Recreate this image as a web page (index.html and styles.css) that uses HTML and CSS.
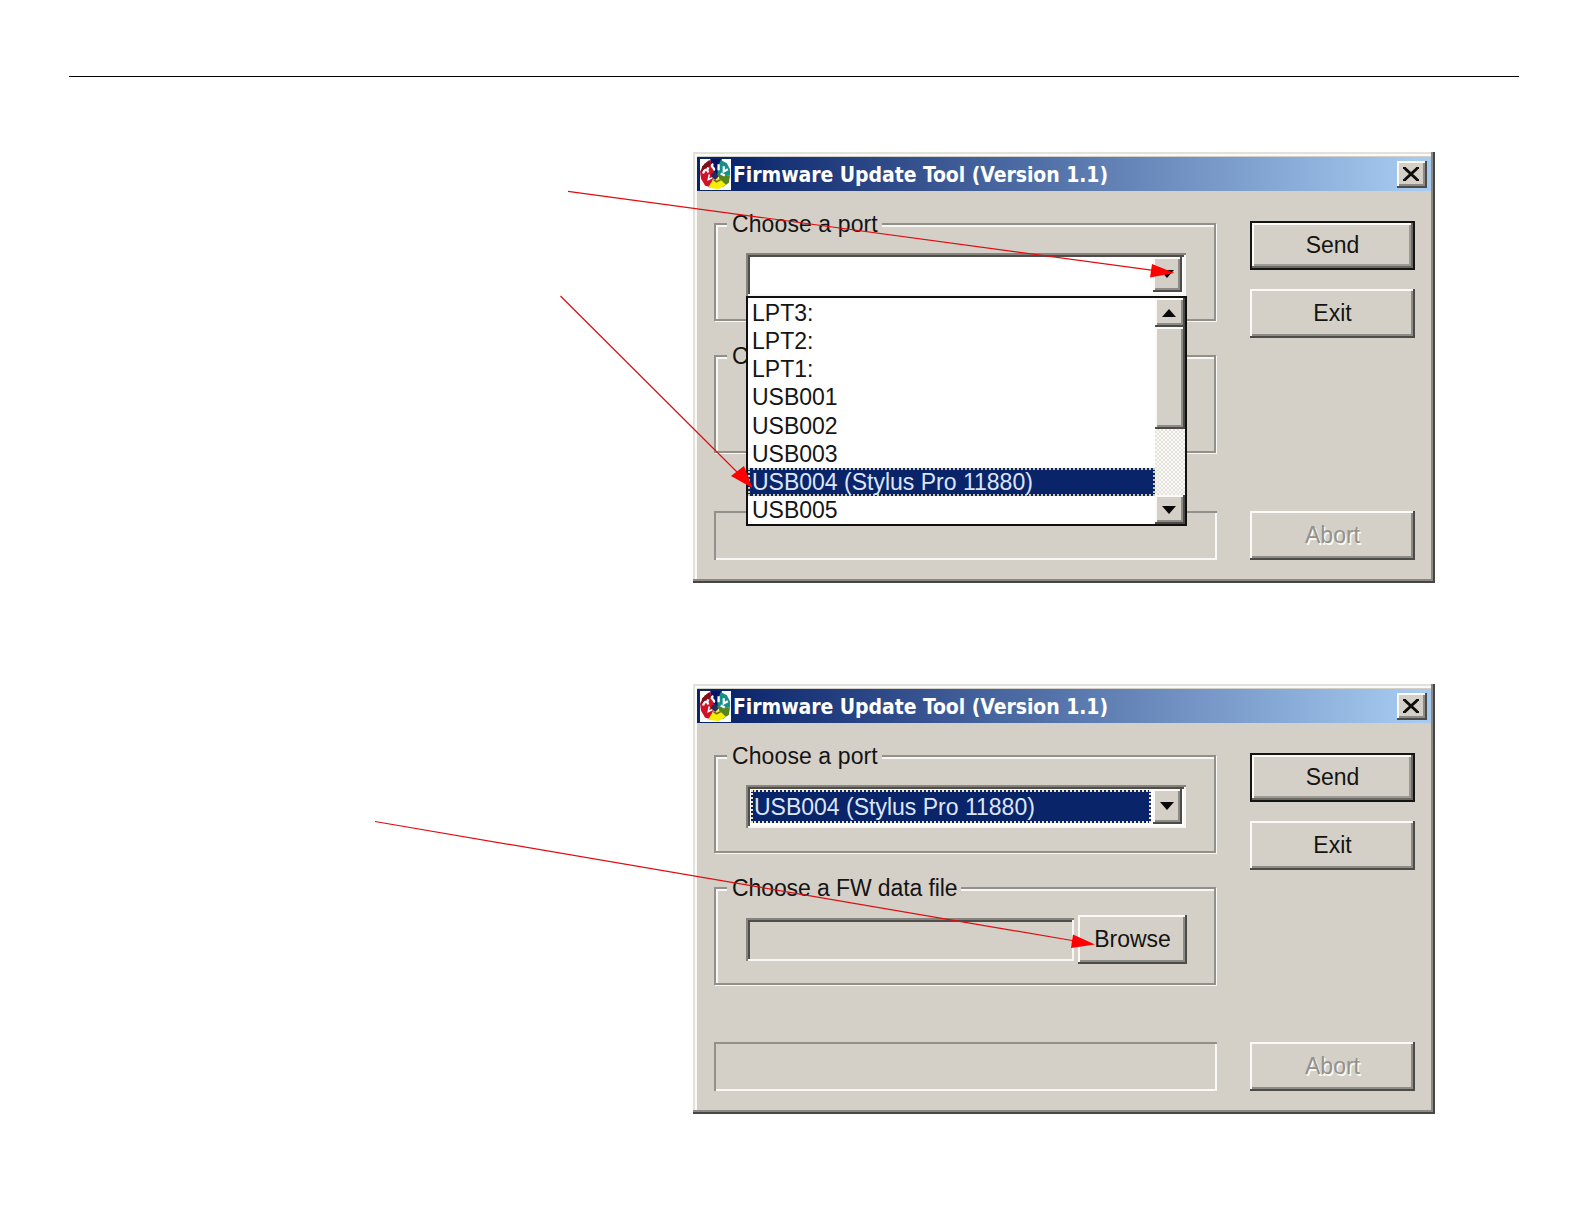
FILE: index.html
```html
<!DOCTYPE html>
<html lang="en">
<head>
<meta charset="utf-8">
<title>Firmware Update Tool</title>
<link rel="stylesheet" href="styles.css">
</head>
<body>
<svg class="defs" width="0" height="0" aria-hidden="true">
  <defs>
    <symbol id="app" viewBox="0 0 30 30">
      <rect width="30" height="30" fill="#fff"/>
      <path d="M10 0h11v11l-5 5-6-6z" fill="#071466"/>
      <path d="M0 12 5 4 10 1 12 8 14 15 10 27 5 26 1 19z" fill="#d01226"/>
      <path d="M2 7 9 1 11 6 6 9 1 13z" fill="#7c101c"/>
      <path d="M20 1 26 4 29 10 29 16 17 16 17 9z" fill="#15908a"/>
      <path d="M17 15 29 16 28 23 22 27z" fill="#56861e"/>
      <path d="M15 17 20 20 25 25 18 29 8 28 10 24z" fill="#f3ed08"/>
      <path d="M11 14 15 12 18 17 15 20 11 18z" fill="#282b58"/>
      <path d="M3 14c1-4 4-5 5-1M13 5c-5 2 3 4 0 6M8 8l-1 3M18 5v6M23 7v5l4-2M20 14l4 2" fill="none" stroke="#fff" stroke-width="2.200"/>
      <path d="M9 15l-1 5 4-2" fill="none" stroke="#fff" stroke-width="1.500"/>
      <path d="M13 20l3 2 4-2" fill="none" stroke="#766b00" stroke-width="1.500"/>
    </symbol>
    <symbol id="close" viewBox="0 0 16 14">
      <path d="M2 1.5 14 12.5M14 1.5 2 12.5" stroke="#0c0c0c" stroke-width="3"/>
      <path d="M0 1h3M13 1h3M0 13h3M13 13h3" stroke="#111" stroke-width="2"/>
    </symbol>
    <symbol id="down" viewBox="0 0 14 8"><path d="M0 0h14L7 8z" fill="#080808"/></symbol>
    <symbol id="up" viewBox="0 0 14 8"><path d="M0 8h14L7 0z" fill="#080808"/></symbol>
  </defs>
</svg>
<main class="page">
  <hr class="rule">

  <section class="dialog">
    <header class="titlebar">
      <svg class="app-icon"><use href="#app"/></svg>
      <span class="title">Firmware Update Tool (Version 1.1)</span>
      <span class="close raised"><svg width="16" height="14"><use href="#close"/></svg></span>
    </header>
    <div class="content">
      <div class="fields">
        <div class="group">
          <span class="legend">Choose a port</span>
          <div class="combo sunken">
            <span class="value empty"></span>
            <span class="drop raised"><svg width="14" height="8"><use href="#down"/></svg></span>
            <div class="list">
              <ul class="options">
                <li>LPT3:</li>
                <li>LPT2:</li>
                <li>LPT1:</li>
                <li>USB001</li>
                <li>USB002</li>
                <li>USB003</li>
                <li class="selected">USB004 (Stylus Pro 11880)</li>
                <li>USB005</li>
              </ul>
              <div class="scrollbar">
                <span class="step raised"><svg width="14" height="8"><use href="#up"/></svg></span>
                <span class="thumb raised"></span>
                <span class="track"></span>
                <span class="step raised"><svg width="14" height="8"><use href="#down"/></svg></span>
              </div>
            </div>
          </div>
        </div>
        <div class="group">
          <span class="legend">C</span>
        </div>
        <div class="progress"></div>
      </div>
      <div class="actions">
        <div class="btn primary">Send</div>
        <div class="btn raised">Exit</div>
        <div class="btn raised disabled">Abort</div>
      </div>
    </div>
  </section>

  <section class="dialog">
    <header class="titlebar">
      <svg class="app-icon"><use href="#app"/></svg>
      <span class="title">Firmware Update Tool (Version 1.1)</span>
      <span class="close raised"><svg width="16" height="14"><use href="#close"/></svg></span>
    </header>
    <div class="content">
      <div class="fields">
        <div class="group">
          <span class="legend">Choose a port</span>
          <div class="combo sunken">
            <span class="value">USB004 (Stylus Pro 11880)</span>
            <span class="drop raised"><svg width="14" height="8"><use href="#down"/></svg></span>
          </div>
        </div>
        <div class="group">
          <span class="legend tight">Choose a FW data file</span>
          <div class="file">
            <div class="path sunken"></div>
            <div class="btn browse raised">Browse</div>
          </div>
        </div>
        <div class="progress"></div>
      </div>
      <div class="actions">
        <div class="btn primary">Send</div>
        <div class="btn raised">Exit</div>
        <div class="btn raised disabled">Abort</div>
      </div>
    </div>
  </section>

  <svg class="callouts" width="1584" height="1224" viewBox="0 0 1584 1224">
    <path class="lead" d="M568 191.300 1155 270.600M560.500 296 740 475M375 821.500 1075 941"/>
    <path class="head" d="M1174.500 273 1152 264 1150 277.500zM752.500 488 744 466 731 476zM1095 944.500 1073 934.500 1071 948z"/>
  </svg>
</main>
</body>
</html>
```
FILE: styles.css
```css
* { box-sizing: border-box; }

body {
  margin: 0;
  background: #fff;
  color: #141414;
  font: 23px/28px "Liberation Sans", Arial, sans-serif;
}

.defs { position: absolute; }

.page {
  position: relative;
  width: 1584px;
  height: 1224px;
  overflow: hidden;
  padding: 76px 65px 0 69px;
}

.rule {
  margin: 0;
  border: 0;
  height: 1px;
  background: #000;
}

/* dialog frame */
.dialog {
  width: 742px;
  height: 431px;
  margin: 75px 0 0 624px;
  padding: 5px 4px 0;
  background: #d4d0c8;
  box-shadow: inset -2px -2px #454545, inset -4px -4px #8b8984,
    inset 2px 2px #e3e1dc, inset 4px 4px #fafaf8;
}
.dialog + .dialog { margin-top: 101px; height: 430px; }

.titlebar {
  display: flex;
  align-items: center;
  height: 34px;
  padding: 0 4px 0 3px;
  background: linear-gradient(90deg, #0a246a 4%, #a6caf0 98%);
}
.app-icon { width: 31px; height: 31px; flex: none; }
.title {
  flex: 1;
  padding: 1px 0 0 2px;
  color: #fff;
  font: bold 21px/32px "DejaVu Sans Condensed", "DejaVu Sans", sans-serif;
  font-stretch: condensed;
  letter-spacing: -.06px;
  white-space: nowrap;
}
.close {
  display: grid;
  place-items: center;
  width: 30px;
  height: 27px;
  padding: 0 2px 1px 0;
}

.raised {
  background: #d4d0c8;
  box-shadow: inset -2px -2px #4c4b47, inset 2px 2px #fbfaf6, inset -4px -4px #8d8b85;
}
.sunken {
  box-shadow: inset 2px 2px #85837c, inset -2px -2px #f8f7f3, inset 4px 4px #4e4d49;
}

/* dialog body */
.content {
  display: grid;
  grid-template-columns: 502px 165px;
  column-gap: 34px;
  padding: 30px 0 0 17px;
}
.fields { padding-top: 2px; }

.group {
  height: 98px;
  margin-bottom: 34px;
  border: 2px solid #92908a;
  box-shadow: 1px 1px #f8f7f3, inset 2px 2px #f8f7f3;
}
.legend {
  display: block;
  width: max-content;
  height: 28px;
  margin: -15px 0 15px 11px;
  padding: 0 4px 0 5px;
  background: #d4d0c8;
  letter-spacing: .1px;
}
.legend.tight { letter-spacing: -.1px; }

.combo {
  position: relative;
  display: flex;
  width: 440px;
  height: 43px;
  margin-left: 30px;
  padding: 4px;
  background: #fff;
}
.value {
  flex: 1;
  margin: 1px 2px 1px 1px;
  padding-left: 1px;
  border: 2px dotted #f3e4b4;
  background: #0a246a;
  color: #dde6f8;
  line-height: 30px;
  white-space: nowrap;
}
.value.empty { border: 0; background: none; }
.drop {
  display: grid;
  place-items: center;
  width: 29px;
  padding: 0 2px 2px 0;
}

/* open port list */
.list {
  position: absolute;
  z-index: 1;
  left: 0;
  top: 43px;
  display: flex;
  width: 441px;
  height: 230px;
  border: 2px solid #101010;
  background: #fff;
}
.options {
  flex: 1;
  margin: 1px 0 0;
  padding: 0;
  list-style: none;
}
.options li {
  height: 28.15px;
  padding-left: 4px;
  line-height: 29px;
  white-space: nowrap;
}
.options .selected {
  padding-left: 2px;
  border: 2px dotted #cfc9a8;
  background: #0a246a;
  color: #dde6f8;
  line-height: 25px;
}
.scrollbar {
  display: flex;
  flex-direction: column;
  width: 30px;
}
.step { display: grid; place-items: center; height: 29px; padding-right: 2px; }
.thumb { height: 102px; }
.track {
  flex: 1;
  background: repeating-conic-gradient(#e4e1da 0 25%, #fafaf8 0 50%) 0 0 / 4px 4px;
}

.file { display: flex; margin: -2px 0 0 30px; gap: 4px; align-items: center; }
.path { width: 328px; height: 43px; }

.progress {
  width: 503px;
  height: 49px;
  margin-top: 58px;
  box-shadow: inset 2px 2px #92908a, inset -2px -2px #f8f7f3;
}

.dialog + .dialog .progress { margin-top: 57px; }

/* buttons */
.actions { display: flex; flex-direction: column; }
.btn {
  height: 49px;
  line-height: 48px;
  text-align: center;
}
.actions .btn + .btn { margin-top: 19px; }
.primary {
  border: 2px solid #141414;
  line-height: 44px;
  background: #d4d0c8;
  box-shadow: inset -2px -2px #6b6964, inset 2px 2px #fbfaf6, inset -4px -4px #9c9a93;
}
.disabled {
  color: #94928c;
  text-shadow: 1.500px 1.500px #fbfaf6;
}
.actions .btn + .disabled { margin-top: 173px; }
.dialog + .dialog .btn + .disabled { margin-top: 172px; }
.browse { width: 109px; }

/* pointer lines drawn over the dialogs */
.callouts { position: absolute; z-index: 2; left: 0; top: 0; pointer-events: none; }
.lead { fill: none; stroke: #e00c10; stroke-width: 1.200; }
.head { fill: #fe0000; }
```
